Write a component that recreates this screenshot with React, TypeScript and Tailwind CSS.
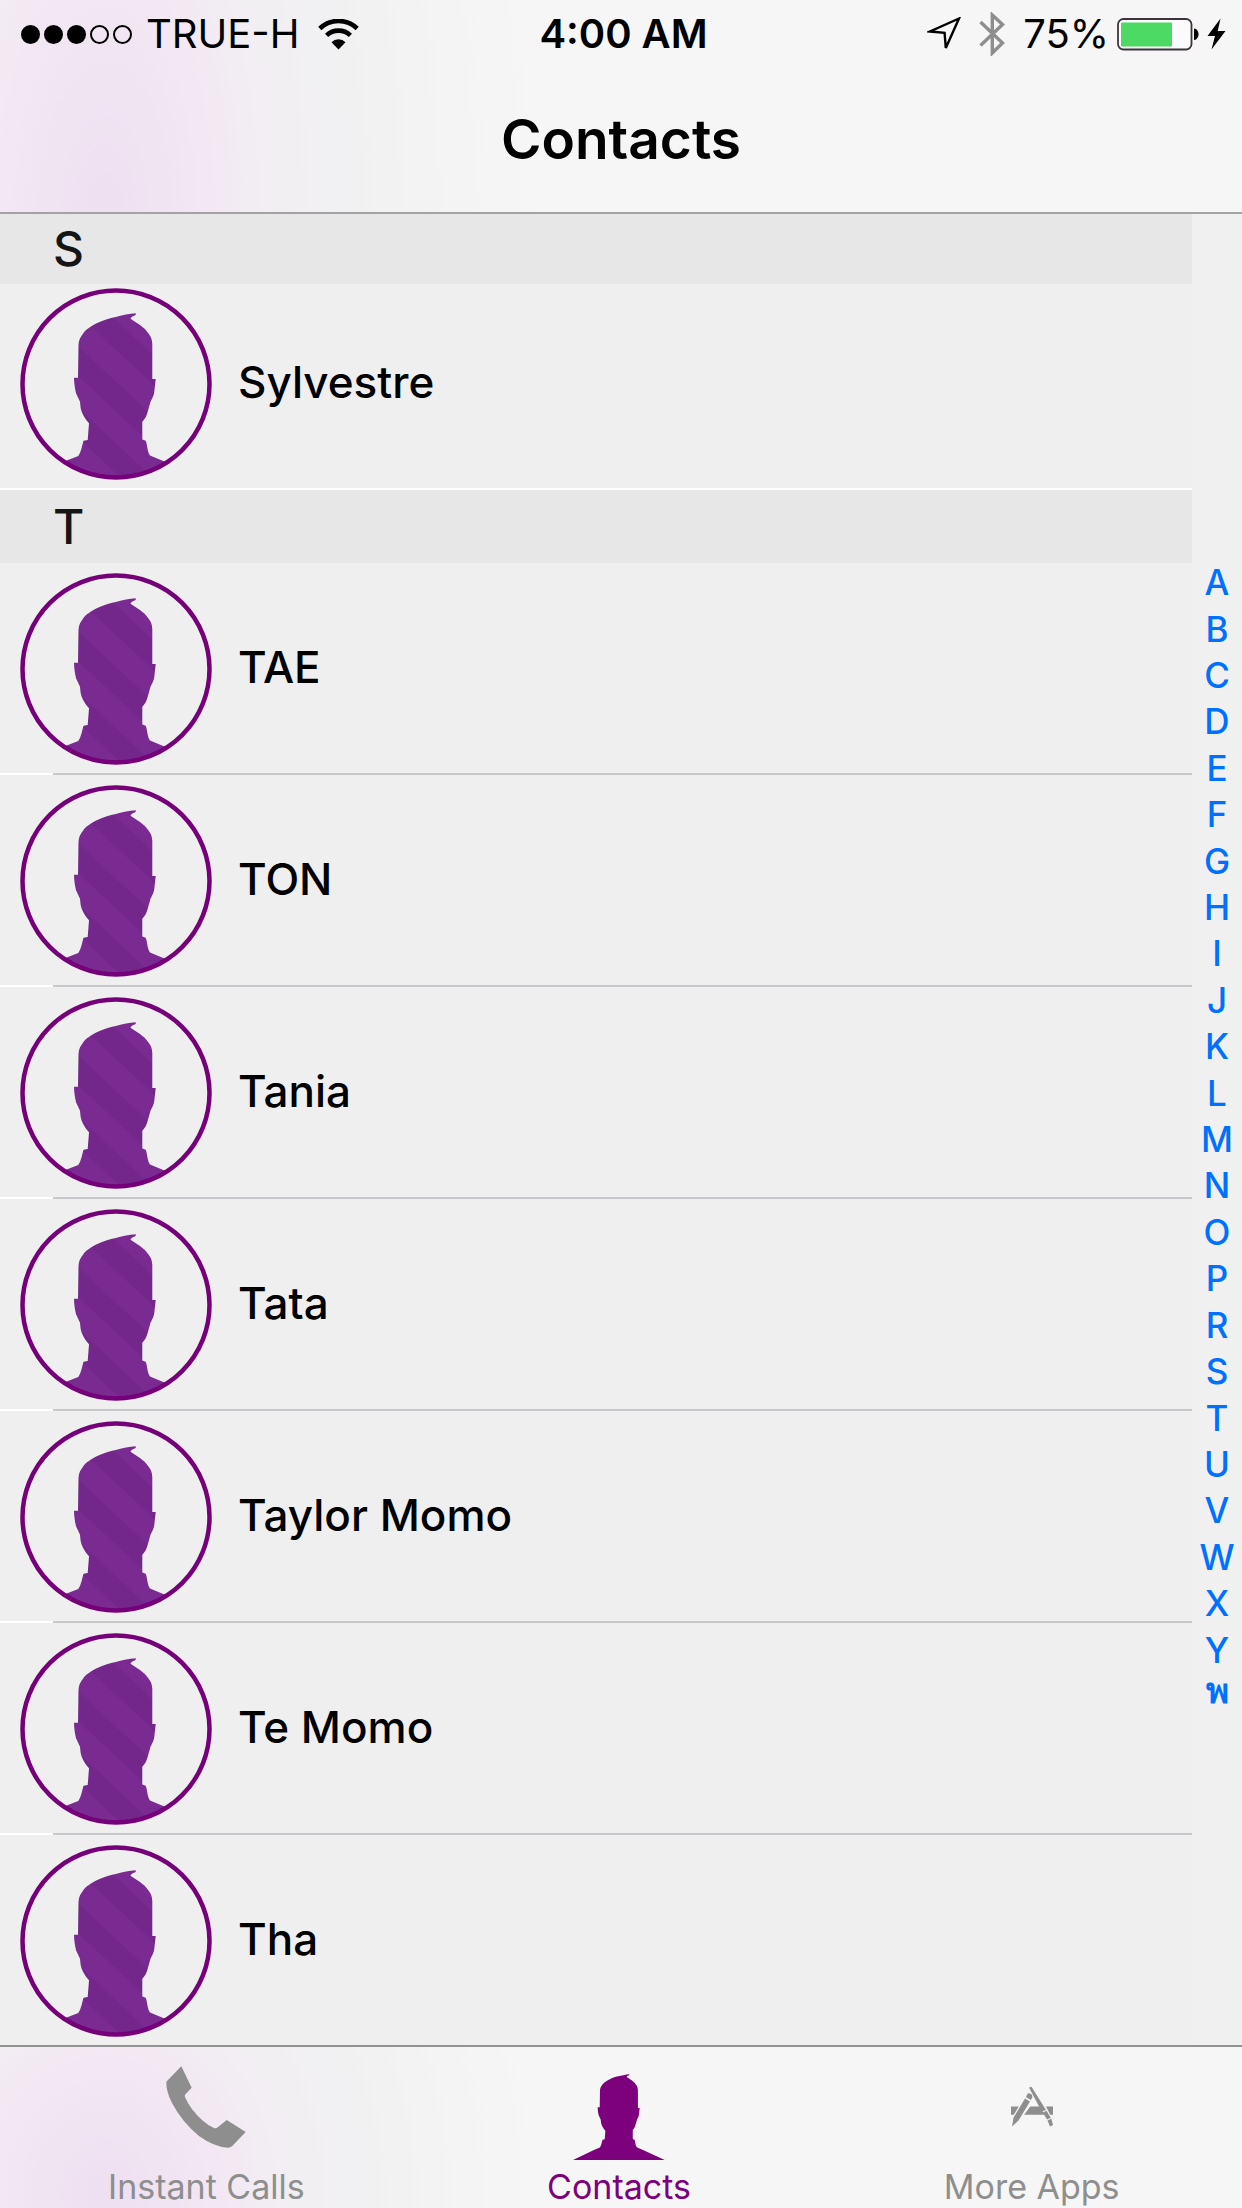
import type { ReactNode } from 'react';

const PERSON_PATH =
  'M115.7 25.3 C109 25.6 103 27.4 96.7 28.7 C89 30.2 83 32 76.7 35.3 C70 38.8 66 41.5 63.3 45.3 C60.5 49 58.7 52 58.5 57 L58 89.7 L54 89.7 C54 95 55 101 56 105.3 L60 113.7 C60.4 118 60.4 120 61.7 123.7 C63.5 128.5 66 132 69 135.3 L67.7 152 L63.5 152.7 C62 158 61 164 58.3 168 L46.7 172.5 L6 192 L184.5 192 L143.3 173 L130 167.5 C127 163 127.5 157 125.7 152.7 L122.3 151.5 L122.3 133.7 C125 131 126.8 127.5 127.7 123.7 L130.5 113.7 C132.5 110 134 107 134.3 103.7 L135.7 91 L132.3 91 L132.3 56 C132 51.5 131 48.5 128.3 45.3 C126 42 123.5 39.5 120 37 L110.5 30.8 C110.8 29 113.5 28 115.7 27 Z';

const sections = [
  { letter: 'S', contacts: ['Sylvestre'] },
  { letter: 'T', contacts: ['TAE', 'TON', 'Tania', 'Tata', 'Taylor Momo', 'Te Momo', 'Tha'] },
];

const indexLetters = [...'ABCDEFGHIJKLMNOPRSTUVWXYพ'];

function Avatar() {
  return (
    <svg viewBox="0 0 192 192" className="w-48 h-48 shrink-0" aria-hidden="true">
      <path d={PERSON_PATH} fill="url(#stripes)" clipPath="url(#avatar-clip)" />
      <circle cx="96" cy="96" r="93.5" fill="none" stroke="#750079" strokeWidth="4.5" />
    </svg>
  );
}

function StatusBar() {
  return (
    <div className="grid grid-cols-[1fr_auto_1fr] items-center h-[68px] pl-[21px] pr-4 text-[40px] leading-none">
      <div className="flex items-center">
        <div className="flex gap-1">
          {[true, true, true, false, false].map((filled, i) => (
            <span key={i} className={`w-[19px] h-[19px] rounded-full border-2 border-black ${filled ? 'bg-black' : ''}`} />
          ))}
        </div>
        <span className="ml-3.5">TRUE-H</span>
        <svg width="41" height="31" viewBox="0 0 41 31" className="ml-[18px]" aria-label="Wi-Fi">
          <path d="M1.8 9.5 A27 27 0 0 1 39.2 9.5" fill="none" stroke="black" strokeWidth="4.6" />
          <path d="M8.6 16.4 A17.2 17.2 0 0 1 32.4 16.4" fill="none" stroke="black" strokeWidth="4.6" />
          <path d="M13.5 23.2 A10 10 0 0 1 27.5 23.2 L20.5 30.5 Z" fill="black" />
        </svg>
      </div>
      <span className="font-semibold">4:00 AM</span>
      <div className="flex items-center justify-end">
        <svg width="34" height="34" viewBox="0 0 34 34" aria-label="Location">
          <path d="M32 1.5 L3 14.5 L17.6 15.8 L18.8 31 Z" fill="none" stroke="black" strokeWidth="2.4" />
        </svg>
        <svg width="26" height="44" viewBox="0 0 26 44" className="ml-[18px]" aria-label="Bluetooth">
          <path d="M1.5 10 L23.5 31 L13.3 41 V3 L23.5 12.5 L1.5 33.5" fill="none" stroke="#8e8e8e" strokeWidth="3.4" />
        </svg>
        <span className="ml-[18px]">75%</span>
        <svg width="82" height="33" viewBox="0 0 82 33" className="ml-2" aria-label="Battery">
          <rect x="1" y="1" width="73.5" height="30.5" rx="5.5" fill="#fbfbfb" stroke="#3d333d" strokeWidth="1.8" />
          <rect x="4" y="4.5" width="51" height="24" rx="1" fill="#4cd964" />
          <path d="M77 10.5 C83 11 83 21.5 77 22 Z" fill="black" />
        </svg>
        <svg width="19" height="32" viewBox="0 0 19 32" className="ml-2" aria-label="Charging">
          <path d="M13.5 0.5 L0.5 18 L8 18 L4.5 31.5 L18.5 13 L10.7 13 Z" fill="black" />
        </svg>
      </div>
    </div>
  );
}

function Tab({ label, active = false, children }: { label: string; active?: boolean; children: ReactNode }) {
  return (
    <button className={`flex-1 flex flex-col items-center ${active ? 'text-[#7d007d]' : 'text-[#8e8e8e]'}`}>
      <span className="h-[120px] flex items-center">{children}</span>
      <span className="text-[34px] leading-10">{label}</span>
    </button>
  );
}

export default function App() {
  return (
    <div className="min-h-screen flex flex-col bg-[#efefef] text-black font-[Inter,'Noto_Sans',sans-serif]">
      <svg className="absolute w-0 h-0" aria-hidden="true">
        <defs>
          <pattern id="stripes" width="45" height="45" patternUnits="userSpaceOnUse" patternTransform="rotate(43)">
            <rect width="45" height="45" fill="#7a2b92" />
            <rect y="3" width="45" height="22" fill="#73278b" />
          </pattern>
          <clipPath id="avatar-clip">
            <circle cx="96" cy="96" r="93" />
          </clipPath>
        </defs>
      </svg>

      <header className="border-b-2 border-[#a3a3a3] bg-[#f6f6f6] bg-[radial-gradient(ellipse_440px_1000px_at_105px_100%,#eedff1_0%,#f2e7f3_22%,#f2eef3_36%,#f1f1f2_56%,#f4f4f4_80%,#f6f6f6_100%)]">
        <StatusBar />
        <h1 className="h-36 text-center text-[55px] leading-[142px] font-semibold">Contacts</h1>
      </header>

      <div className="flex-1 flex">
        <main className="flex-1">
          {sections.map((section) => (
            <section key={section.letter} className="group">
              <h2 className="h-[73px] group-first:h-[70px] pl-[53px] flex items-center bg-[#e7e7e7] text-[48px] leading-none font-medium text-[#151515]">
                {section.letter}
              </h2>
              <ul>
                {section.contacts.map((name) => (
                  <li key={name} className="group/row">
                    <a href="#" className="flex items-center gap-[26px] pl-5 pt-2.5 pb-2 group-first:pt-1">
                      <Avatar />
                      <span className="pb-1 text-[44px] leading-none font-medium">{name}</span>
                    </a>
                    <div className="flex h-0.5 bg-white group-last/row:hidden group-first:group-last/row:flex">
                      <span className="flex-1 ml-[53px] bg-[#c8c7cc] group-first:bg-white" />
                    </div>
                  </li>
                ))}
              </ul>
            </section>
          ))}
        </main>
        <nav className="w-[50px] bg-[#f0f0f0] flex flex-col justify-center pt-5" aria-label="Index">
          <ul className="h-[1160px] flex flex-col text-[35px] leading-none font-medium text-[#0070ff]">
            {indexLetters.map((letter) => (
              <li key={letter} className="flex-1 flex items-center justify-center last:items-start last:font-bold">
                <a href="#">{letter}</a>
              </li>
            ))}
          </ul>
        </nav>
      </div>

      <footer className="h-[164px] pr-1 flex border-t-2 border-[#929295] bg-[#f6f6f6] bg-[radial-gradient(ellipse_440px_500px_at_105px_90%,#eedff1_0%,#f2e7f3_24%,#f2eef3_40%,#f1f1f2_60%,#f4f4f4_82%,#f6f6f6_100%)]">
        <Tab label="Instant Calls">
          <svg width="80" height="82" viewBox="0 0 80 82" fill="currentColor" aria-hidden="true">
            <path d="M15.3 .3 L25.7 21.7 L19.2 28.5 Q18.4 29.5 19 31 Q24 43 36.3 54.3 Q42 59.5 48 62 Q50 62.7 51.5 61.5 L60.7 54 L79.7 66 L66 80.3 Q64.5 81.7 62 81.7 Q48 81 33 70 Q16 56 6 37 Q0 25 .3 15.7 Z" />
          </svg>
        </Tab>
        <Tab label="Contacts" active>
          <svg width="92" height="86" viewBox="6 25 179 167" fill="currentColor" className="mt-5" aria-hidden="true">
            <path d={PERSON_PATH} />
          </svg>
        </Tab>
        <Tab label="More Apps">
          <svg width="44" height="42" viewBox="0 0 44 42" fill="currentColor" aria-hidden="true">
            <path d="M1 20.5 H8.7 L3.8 28.8 H1 Z M20.2 20.5 H30 L34.4 28.8 H14.2 Z M36 20.5 H43 V28.8 H40.2 Z" />
            <path d="M15 12.5 L20 15.5 L8.5 34.5 L2 40.5 L3.6 31.5 Z" />
            <path d="M17.8 7.6 Q20 6.5 22 9 L22.3 11.5 L20.8 14 L15.9 11 Z" />
            <path d="M19 1.5 L21.5 .8 L36 24 L31.7 25.6 Z" />
            <path d="M32.7 26.4 L36.5 24.8 L40.8 31.8 L37.1 33.6 Z M37.5 34.4 L41.3 32.7 L43 39 L40 40.5 Z" />
          </svg>
        </Tab>
      </footer>
    </div>
  );
}
